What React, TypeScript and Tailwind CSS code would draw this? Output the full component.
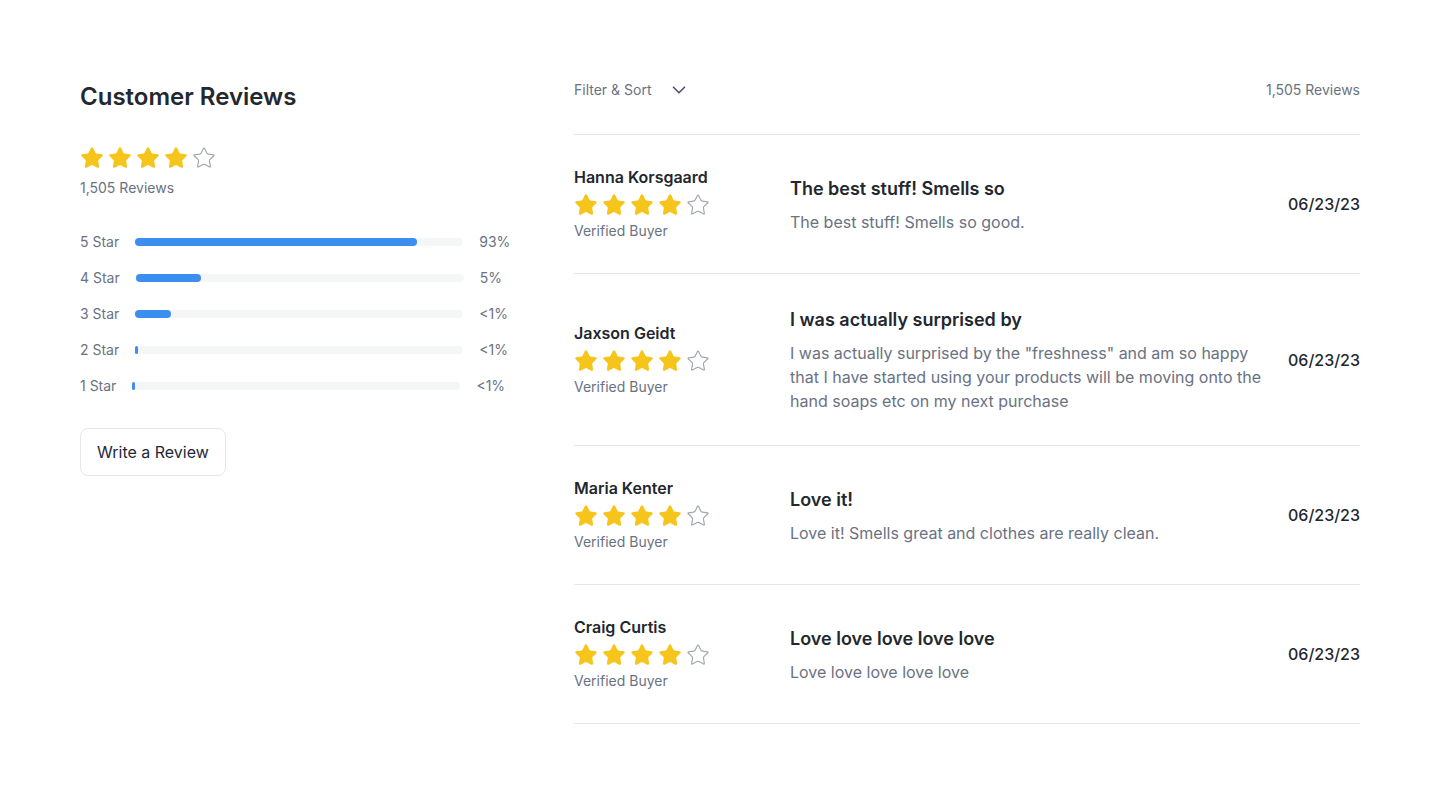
import { Star, ChevronDown } from "lucide-react";

const breakdown = [
  { label: "5 Star", pct: 86, text: "93%" },
  { label: "4 Star", pct: 20, text: "5%" },
  { label: "3 Star", pct: 11, text: "<1%" },
  { label: "2 Star", pct: 0.7, text: "<1%" },
  { label: "1 Star", pct: 0.7, text: "<1%" },
];

const reviews = [
  {
    name: "Hanna Korsgaard",
    title: "The best stuff! Smells so",
    body: "The best stuff! Smells so good.",
    date: "06/23/23",
  },
  {
    name: "Jaxson Geidt",
    title: "I was actually surprised by",
    body: 'I was actually surprised by the "freshness" and am so happy that I have started using your products will be moving onto the hand soaps etc on my next purchase',
    date: "06/23/23",
  },
  {
    name: "Maria Kenter",
    title: "Love it!",
    body: "Love it! Smells great and clothes are really clean.",
    date: "06/23/23",
  },
  {
    name: "Craig Curtis",
    title: "Love love love love love",
    body: "Love love love love love",
    date: "06/23/23",
  },
];

function Stars({ rating }: { rating: number }) {
  return (
    <div className="flex gap-1">
      {[1, 2, 3, 4, 5].map((i) =>
        i <= rating ? (
          <Star key={i} size={24} strokeWidth={1.5} className="fill-[#f6c51c] text-[#f6c51c]" />
        ) : (
          <Star key={i} size={24} strokeWidth={1.2} className="fill-none text-[#a3a8b0]" />
        )
      )}
    </div>
  );
}

export default function App() {
  return (
    <div
      className="min-h-[806px] bg-white px-20 pt-20 text-gray-800"
      style={{ fontFamily: "Inter, 'Noto Sans', sans-serif" }}
    >
      <div className="flex gap-16">
        {/* summary */}
        <div className="w-[430px] shrink-0">
          <h2 className="mt-px text-2xl leading-8 font-semibold text-[#23272e]">Customer Reviews</h2>
          <div className="mt-[33px]">
            <Stars rating={4} />
          </div>
          <p className="mt-2 text-sm leading-5 text-gray-500">1,505 Reviews</p>

          <div className="mt-[26px]">
            {breakdown.map((b) => (
              <div key={b.label} className="flex h-9 items-center gap-4 text-sm text-gray-500">
                <span className="shrink-0 whitespace-nowrap">{b.label}</span>
                <div className="h-2 w-[328px] shrink-0 rounded-full bg-[#f5f6f7]">
                  <div
                    className="h-2 rounded-full bg-[#3c8ef0]"
                    style={{ width: `${b.pct}%`, minWidth: 2 }}
                  />
                </div>
                <span className="whitespace-nowrap">{b.text}</span>
              </div>
            ))}
          </div>

          <button className="mt-6 h-12 rounded-lg border border-gray-200 px-4 text-base text-gray-800">
            Write a Review
          </button>
        </div>

        {/* list */}
        <div className="flex-1">
          <div className="flex h-5 items-center justify-between text-sm text-gray-500">
            <div className="flex items-center gap-[17px]">
              <span>Filter &amp; Sort</span>
              <ChevronDown size={22} strokeWidth={1.8} className="text-gray-600" />
            </div>
            <span>1,505 Reviews</span>
          </div>
          <div className="mt-[34px] border-t border-gray-200">
            {reviews.map((r) => (
              <div key={r.name} className="flex items-center border-b border-gray-200 py-8">
                <div className="w-[216px] shrink-0">
                  <p className="text-base leading-5 font-semibold text-[#23272e]">{r.name}</p>
                  <div className="mt-1.5">
                    <Stars rating={4} />
                  </div>
                  <p className="mt-1 text-sm leading-5 text-gray-500">Verified Buyer</p>
                </div>
                <div className="w-[484px] shrink-0">
                  <h3 className="text-lg leading-7 font-semibold text-[#23272e]">{r.title}</h3>
                  <p className="mt-[7px] text-base leading-6 text-gray-500">{r.body}</p>
                </div>
                <div className="ml-auto text-base font-medium text-[#23272e]">{r.date}</div>
              </div>
            ))}
          </div>
        </div>
      </div>
    </div>
  );
}
